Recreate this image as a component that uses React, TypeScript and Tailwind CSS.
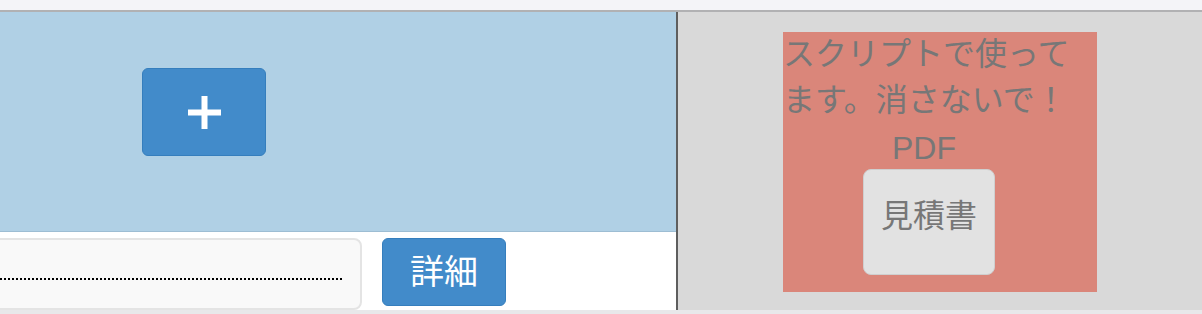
import React from "react";

// Quote screen fragment: add button, detail row, and the PDF script box
export default function App() {
  return (
    <div className="h-[314px] w-[1202px] overflow-hidden bg-[#e8e8ea] font-['Liberation_Sans','Noto_Sans_CJK_JP',sans-serif]">
      {/* top strip */}
      <div className="h-[12px] border-b-2 border-[#b1b1b3] bg-[#f4f4f8]" />

      <div className="flex h-[298px]">
        {/* left column */}
        <div className="flex w-[676px] flex-col">
          <div className="h-[220px] border-b border-[#9dbdd3] bg-[#b0d0e5] pl-[142px] pt-[56px]">
            <button className="flex h-[88px] w-[124px] items-center justify-center rounded-[6px] border border-[#357ebd] bg-[#428bca]">
              <svg width="33" height="33" viewBox="0 0 33 33">
                <rect x="13.5" y="0" width="6" height="33" fill="#fff" />
                <rect x="0" y="13.5" width="33" height="6" fill="#fff" />
              </svg>
            </button>
          </div>

          <div className="flex flex-1 items-start bg-white">
            <div className="-ml-[20px] mt-[6px] h-[72px] w-[382px] rounded-[8px] border-2 border-[#e4e4e4] bg-[#f9f9f9] pl-[18px] pr-[18px]">
              <div className="h-[40px] border-b-2 border-dotted border-black" />
            </div>
            <button className="ml-[20px] mt-[6px] flex h-[68px] w-[124px] items-center justify-center rounded-[6px] border border-[#357ebd] bg-[#428bca] text-[34px] leading-none text-white">
              詳細
            </button>
          </div>
        </div>

        {/* divider */}
        <div className="w-[2px] bg-[#5e5e5e]" />

        {/* right column */}
        <div className="flex flex-1 justify-center bg-[#d9d9d9] pt-[20px]">
          <div className="h-[260px] w-[314px] bg-[#da867a] text-[32px] leading-[1.42857] text-[#777777]">
            <p>スクリプトで使ってます。消さないで！</p>
            <p className="pl-[109px] pt-[4px] leading-[42px]">PDF</p>
            <button className="ml-[80px] flex h-[106px] w-[132px] justify-center rounded-[8px] border border-[#cfcfcf] bg-[#e2e2e2] pt-[24px] text-[32px] leading-[1.42857] text-[#777777]">
              見積書
            </button>
          </div>
        </div>
      </div>
    </div>
  );
}
